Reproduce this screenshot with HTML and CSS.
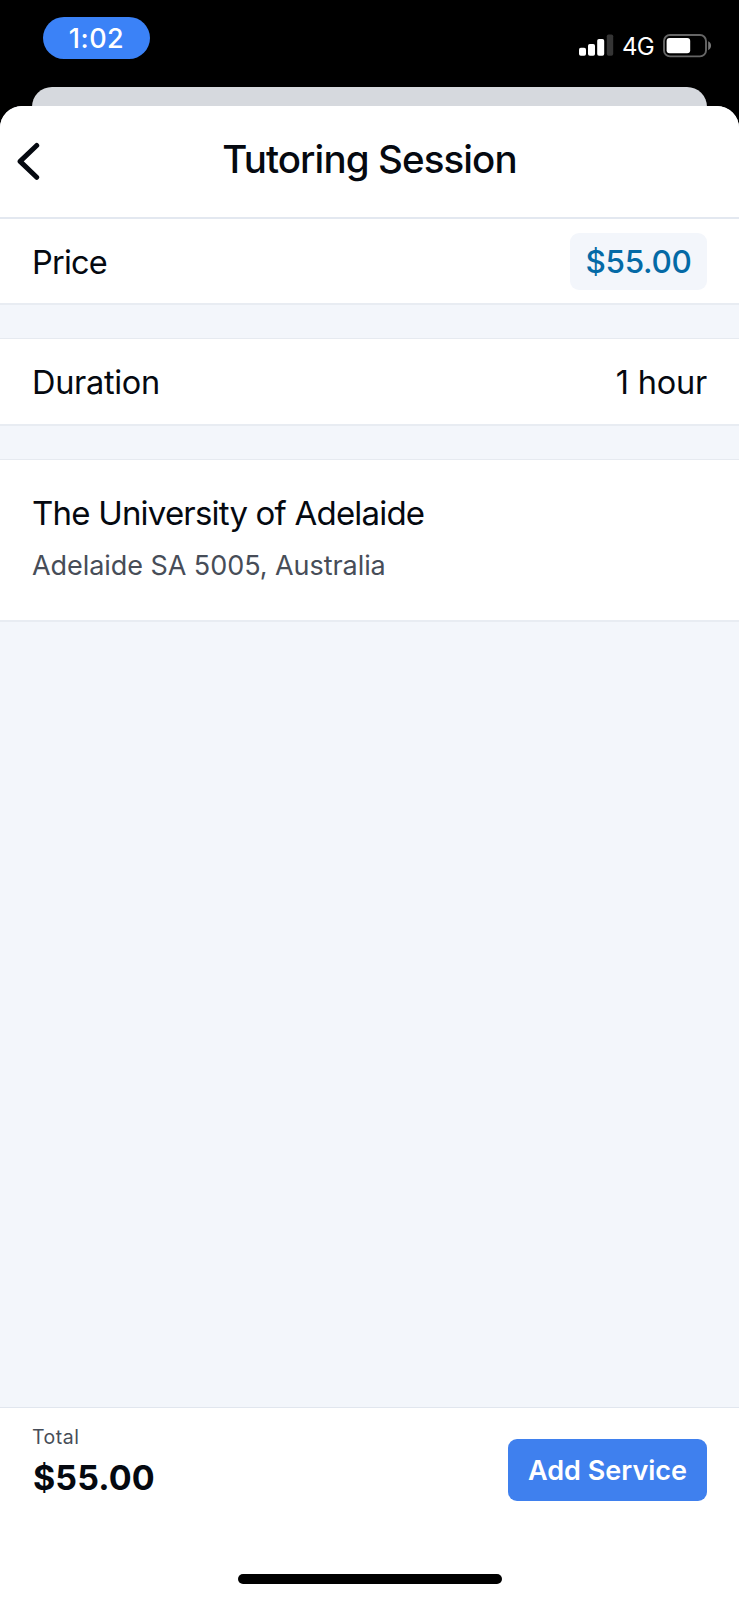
FILE: index.html
```html
<!DOCTYPE html>
<html lang="en">
<head>
<meta charset="utf-8">
<title>Tutoring Session</title>
<link rel="stylesheet" href="styles.css">
</head>
<body>
<div class="screen">
  <div class="status">
    <div class="clock"><span class="t-clock">1:02</span></div>
    <div class="indicators">
      <svg class="signal" width="35" height="22" viewBox="0 0 35 22">
        <rect x="0" y="13.7" width="7" height="8" rx="1.8" fill="#fff"/>
        <rect x="9" y="10" width="7" height="11.7" rx="1.8" fill="#fff"/>
        <rect x="18.2" y="5" width="7" height="16.7" rx="1.8" fill="#fff"/>
        <rect x="27.8" y="0.4" width="6.4" height="21.3" rx="1.8" fill="#353535"/>
      </svg>
      <span class="t-net">4G</span>
      <svg class="battery" width="50" height="24" viewBox="0 0 50 24">
        <rect x="1" y="1" width="42" height="21.4" rx="6" fill="none" stroke="#666" stroke-width="1.9"/>
        <rect x="3.6" y="4" width="23.6" height="15.3" rx="3" fill="#fff"/>
        <path d="M45.2 7.3C49 9 49 14.5 45.2 16.2Z" fill="#777"/>
      </svg>
    </div>
  </div>
  <div class="behind"></div>
  <main class="sheet">
    <header class="header">
      <svg class="back" width="26" height="40" viewBox="0 0 26 40">
        <path d="M20.7 3.5L4.1 19.4L20.7 35.3" fill="none" stroke="#050910" stroke-width="5" stroke-linecap="round" stroke-linejoin="round"/>
      </svg>
      <h1 class="t-title">Tutoring Session</h1>
    </header>
    <section class="row">
      <span class="t-price">Price</span>
      <span class="chip"><span class="t-chip">$55.00</span></span>
    </section>
    <section class="row">
      <span class="t-duration">Duration</span>
      <span class="t-hour">1 hour</span>
    </section>
    <section class="place">
      <span class="t-place">The University of Adelaide</span>
      <span class="t-address">Adelaide SA 5005, Australia</span>
    </section>
    <footer class="footer">
      <div class="summary">
        <div class="total">
          <span class="t-total">Total</span>
          <span class="t-sum">$55.00</span>
        </div>
        <button class="add"><span class="t-add">Add Service</span></button>
      </div>
      <div class="home"></div>
    </footer>
  </main>
</div>
</body>
</html>
```
FILE: styles.css
```css
* { box-sizing: border-box; }
body { margin: 0; background: #000; font-family: Inter, "Liberation Sans", sans-serif; color: #050910; }
span, h1 { white-space: nowrap; display: block; }
.screen { width: 739px; height: 1600px; display: flex; flex-direction: column; overflow: hidden; background: #000; }
.status { height: 86.5px; flex: none; display: flex; justify-content: space-between; align-items: flex-start; padding: 17px 26px 0 43px; color: #fff; }
.clock { width: 107px; height: 42px; border-radius: 21px; background: #3b82f7; display: flex; justify-content: center; }
.indicators { display: flex; align-items: flex-start; padding-top: 17px; width: 134px; }
.signal { flex: none; }
.battery { flex: none; margin-left: auto; }
.behind { height: 40px; margin: 0 32px -20.5px; border-radius: 20px 20px 0 0; background: #d6d9de; flex: none; }
.sheet { position: relative; flex: 1; display: flex; flex-direction: column; background: #f3f6fb; border-radius: 22px 22px 0 0; overflow: hidden; }
.header { height: 113px; flex: none; background: #fff; border-bottom: 2px solid #e3e8f0; display: grid; grid-template-columns: 52px 1fr 52px; padding-top: 33px; }
.back { margin: 3px 0 0 16px; }
.t-title { margin: 0; text-align: center; font-size: 38.5px; font-weight: 500; line-height: 40px; letter-spacing: -0.9px; }
.row { height: 88px; flex: none; background: #fff; border-top: 1px solid #e6eaf0; border-bottom: 2px solid #e8ecf2; margin-bottom: 33px; padding: 0 32px; display: flex; justify-content: space-between; align-items: center; }
.header + .row { height: 86px; border-top: 0; }
.chip { width: 137px; height: 57px; border-radius: 9px; background: #f3f6fb; display: flex; align-items: center; justify-content: center; }
.t-price, .t-duration, .t-hour, .t-chip { font-size: 32.5px; line-height: 40px; padding-top: 2px; font-weight: 370; }
.t-price { letter-spacing: -0.8px; padding-top: 4px; }
.t-duration { letter-spacing: -0.3px; padding-top: 3px; }
.t-hour { letter-spacing: -0.2px; padding-top: 3px; }
.t-chip { color: #046aa6; font-weight: 450; font-size: 31.5px; letter-spacing: -0.35px; }
.place { height: 163px; flex: none; background: #fff; border-top: 1px solid #e6eaf0; border-bottom: 2px solid #e8ecf2; padding: 32px 32px 0; }
.t-place { font-size: 33px; line-height: 42px; letter-spacing: -0.8px; font-weight: 370; }
.t-address { font-size: 27px; line-height: 36px; margin-top: 14px; color: #474d58; letter-spacing: -0.06px; font-weight: 370; }
.footer { margin-top: auto; height: 193px; flex: none; background: #fff; border-top: 1px solid #e1e6ee; display: flex; flex-direction: column; align-items: center; justify-content: space-between; padding-bottom: 16px; }
.summary { align-self: stretch; display: flex; justify-content: space-between; padding: 17px 32px 0; }
.t-total { font-size: 19.5px; line-height: 24px; letter-spacing: 0.5px; color: #474d58; }
.t-sum { font-size: 34px; line-height: 42px; margin-top: 8px; padding-left: 1px; font-weight: 650; letter-spacing: 0.1px; }
.add { width: 199px; height: 62px; margin-top: 14px; border: 0; border-radius: 9px; background: #3f80ee; color: #fff; font-family: inherit; padding: 1px 0 0; display: flex; align-items: center; justify-content: center; }
.t-add { font-size: 27px; line-height: 36px; font-weight: 600; }
.t-clock { font-size: 27px; font-weight: 450; line-height: 42px; padding-top: 1px; letter-spacing: 0.5px; }
.t-net { font-size: 24px; line-height: 24px; margin-left: 8px; padding-top: 1px; letter-spacing: -0.8px; }
.home { width: 264px; height: 10px; border-radius: 5px; background: #000; }
```
